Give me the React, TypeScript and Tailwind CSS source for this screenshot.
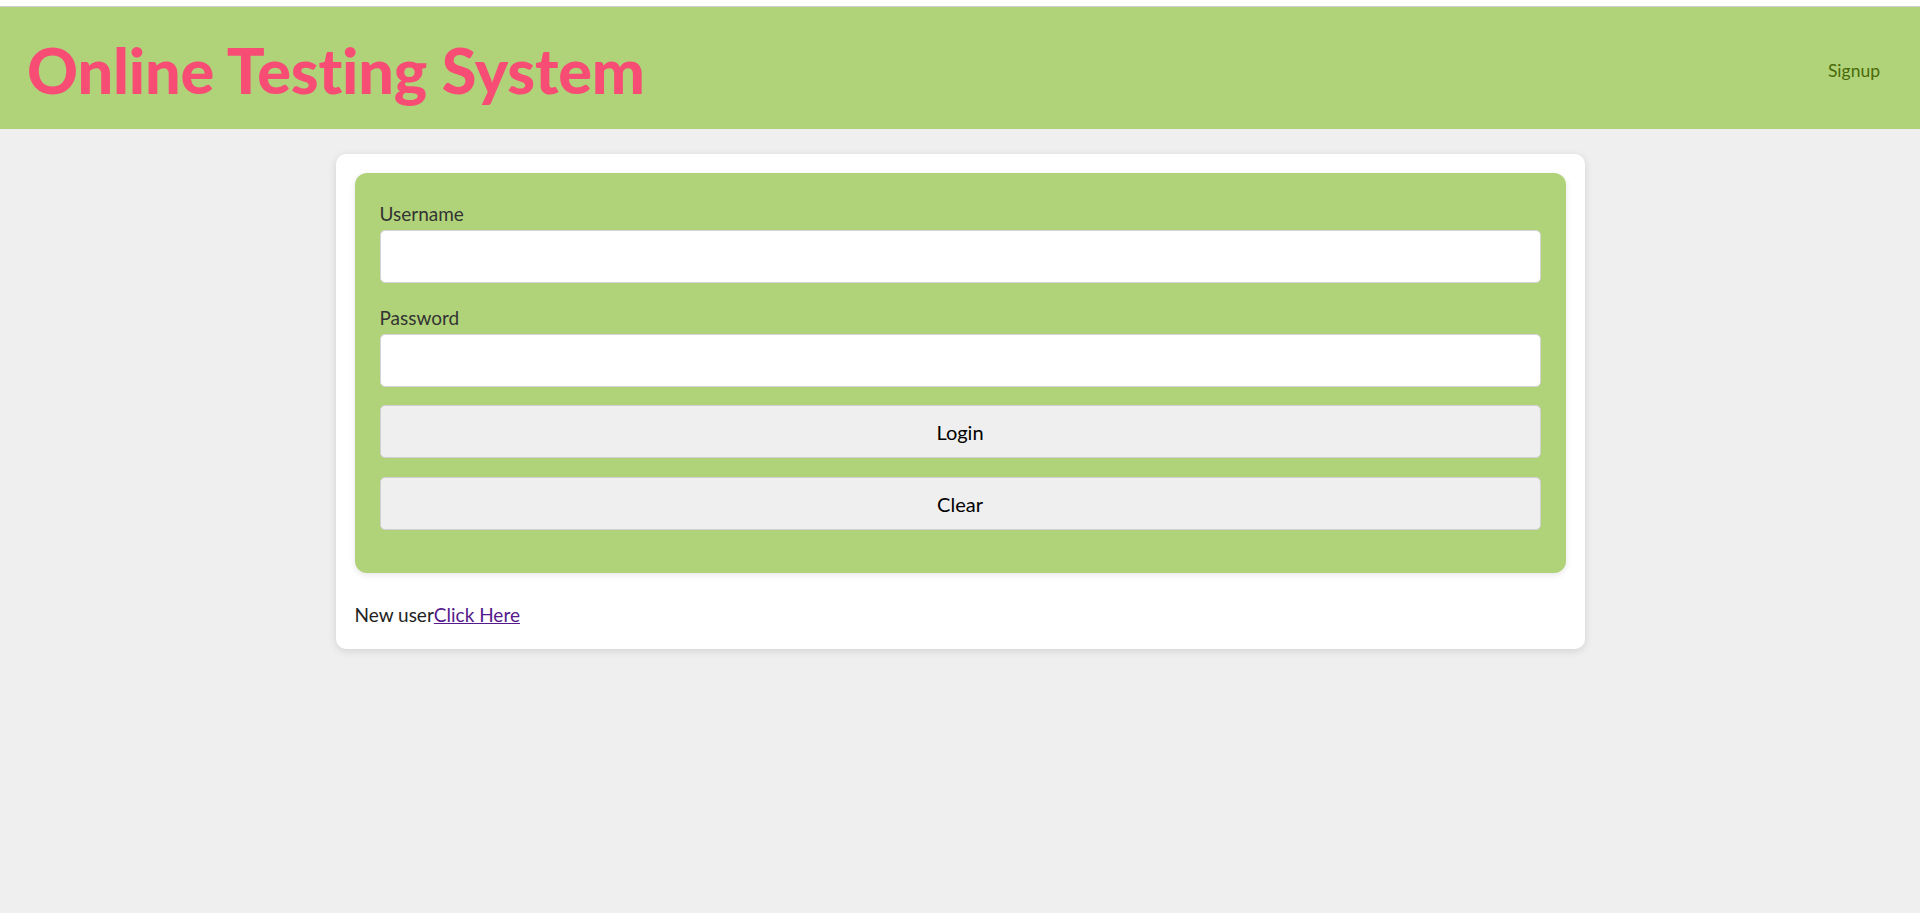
export default function App() {
  return (
    <div className="min-h-[913px] bg-[#efefef] font-['Lato',sans-serif]">
      {/* top strip */}
      <div className="h-[7px] border-b border-[#cfcfcf] bg-white" />
      <header className="flex h-[122px] items-center justify-between bg-[#b0d37a] pl-[27px] pr-[40px]">
        <h1 className="mt-[2px] text-[63px] font-black leading-[63px] tracking-[-0.2px] text-[#f74c74]">
          Online Testing System
        </h1>
        <a href="#" className="mt-[6px] text-[17.5px] text-[#4a6a08]">
          Signup
        </a>
      </header>

      <main className="mx-auto mt-[25px] w-[1249px] rounded-[10px] bg-white p-[19px] shadow-[0_2px_8px_rgba(0,0,0,0.12)]">
        <form className="rounded-[12px] bg-[#b0d37a] px-[25px] pb-[43px] pt-[29px] shadow-[0_2px_6px_rgba(0,0,0,0.1)]">
          <label className="mb-[4px] block text-[19px] leading-[24px] text-[#333]">
            Username
          </label>
          <input
            type="text"
            className="block h-[53px] w-full rounded-[5px] border border-[#d4d4d4] bg-white px-3 text-[18px] outline-none"
          />
          <label className="mb-[4px] mt-[23px] block text-[19px] leading-[24px] text-[#333]">
            Password
          </label>
          <input
            type="password"
            className="block h-[53px] w-full rounded-[5px] border border-[#d4d4d4] bg-white px-3 text-[18px] outline-none"
          />
          <button
            type="button"
            className="mt-[18px] block h-[53px] w-full rounded-[5px] border border-[#cfcfcf] bg-[#efefef] text-[20px] text-black"
          >
            Login
          </button>
          <button
            type="button"
            className="mt-[19px] block h-[53px] w-full rounded-[5px] border border-[#cfcfcf] bg-[#efefef] text-[20px] text-black"
          >
            Clear
          </button>
        </form>
        <div className="mb-[3px] mt-[30px] text-[19px] leading-[24px] text-[#222]">
          New user
          <a href="#" className="text-[#551a8b] underline">
            Click Here
          </a>
        </div>
      </main>
    </div>
  )
}
